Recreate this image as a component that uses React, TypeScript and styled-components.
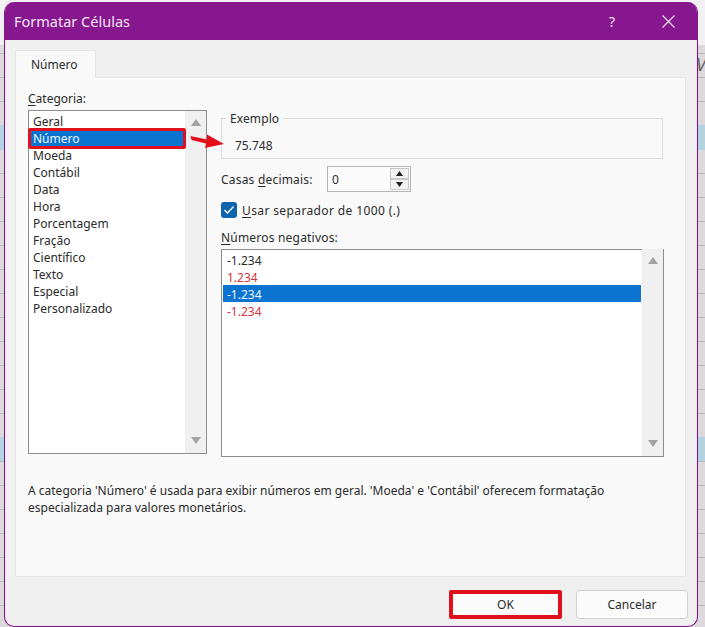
import styled, { createGlobalStyle } from 'styled-components'

const categories = [
	'Geral',
	'Número',
	'Moeda',
	'Contábil',
	'Data',
	'Hora',
	'Porcentagem',
	'Fração',
	'Científico',
	'Texto',
	'Especial',
	'Personalizado',
]

const negatives = [
	{ text: '-1.234', red: false, selected: false },
	{ text: '1.234', red: true, selected: false },
	{ text: '-1.234', red: false, selected: true },
	{ text: '-1.234', red: true, selected: false },
]

const Triangle = ({ down, small }: { down?: boolean; small?: boolean }) => (
	<svg width={small ? 9 : 10} height={small ? 5 : 7} viewBox='0 0 10 7'>
		<path d={down ? 'M0 0H10L5 7Z' : 'M0 7H10L5 0Z'} fill={small ? '#222' : '#a3a3a3'} />
	</svg>
)

const App = () => {
	return (
		<>
			<GlobalStyle />
			<Desktop>
				<ColumnLetter>V</ColumnLetter>
				<Dialog>
					<TitleBar>
						<Title>Formatar Células</Title>
						<HelpButton>?</HelpButton>
						<CloseIcon width='13' height='13' viewBox='0 0 13 13'>
							<path d='M0.5 0.5L12.5 12.5M12.5 0.5L0.5 12.5' stroke='#f5e6f5' strokeWidth='1.1' fill='none' />
						</CloseIcon>
					</TitleBar>

					<TabStrip>
						<Tab>Número</Tab>
					</TabStrip>

					<Panel>
						<Columns>
							<div>
								<FieldLabel>
									<u>C</u>ategoria:
								</FieldLabel>
								<ListBox $height={344} $padTop={2}>
									<ListRows $padLeft={0}>
										{categories.map((category, idx) => (
											<CategoryRow key={category} $selected={idx === 1}>
												{category}
											</CategoryRow>
										))}
									</ListRows>
									<ScrollTrack $top={8} $bottom={9}>
										<Triangle />
										<Triangle down />
									</ScrollTrack>
								</ListBox>
							</div>

							<RightColumn>
								<SampleGroup>
									<SampleLegend>Exemplo</SampleLegend>
									<SampleValue>75.748</SampleValue>
								</SampleGroup>

								<DecimalsRow>
									<DecimalsLabel>
										Casas <u>d</u>ecimais:
									</DecimalsLabel>
									<SpinBox>
										<span>0</span>
										<SpinButtons>
											<SpinButton>
												<Triangle small />
											</SpinButton>
											<SpinButton>
												<Triangle small down />
											</SpinButton>
										</SpinButtons>
									</SpinBox>
								</DecimalsRow>

								<CheckRow>
									<CheckBox>
										<svg width='12' height='10' viewBox='0 0 12 10'>
											<path d='M1.5 5L4.5 8L10.5 1.5' stroke='#fff' strokeWidth='1.3' fill='none' />
										</svg>
									</CheckBox>
									<span>
										<u>U</u>sar separador de 1000 (.)
									</span>
								</CheckRow>

								<NegativesLabel>
									<u>N</u>úmeros negativos:
								</NegativesLabel>
								<ListBox $height={208} $padTop={1}>
									<ListRows $padLeft={1}>
										{negatives.map((row, idx) => (
											<NegativeRow key={idx} $red={row.red} $selected={row.selected}>
												{row.text}
											</NegativeRow>
										))}
									</ListRows>
									<ScrollTrack $top={8} $bottom={9}>
										<Triangle />
										<Triangle down />
									</ScrollTrack>
								</ListBox>
							</RightColumn>
						</Columns>

						<Description>
							A categoria 'Número' é usada para exibir números em geral. 'Moeda' e 'Contábil' oferecem formatação
							<br />
							especializada para valores monetários.
						</Description>

						<Arrow width='36' height='16' viewBox='0 0 36 16'>
							<path d='M0.5 2L1.5 6L16 9.5L15 14L34 10L17 0.5L17 5.5Z' fill='#e3101c' />
						</Arrow>
					</Panel>

					<Footer>
						<OkButton>OK</OkButton>
						<CancelButton>Cancelar</CancelButton>
					</Footer>
				</Dialog>
			</Desktop>
		</>
	)
}

export default App

const GlobalStyle = createGlobalStyle`
	html, body {
		margin: 0;
		padding: 0;
		background: #dcd8dc;
	}
	* {
		box-sizing: border-box;
	}
	u {
		text-underline-offset: 2px;
		text-decoration-thickness: 1px;
	}
`

const Desktop = styled.div`
	position: relative;
	width: 705px;
	height: 627px;
	padding: 2px 7px 0 4px;
	overflow: hidden;
	font-family: 'Noto Sans', 'Liberation Sans', sans-serif;
	font-size: 12px;
	line-height: 17px;
	color: #2b2b2b;
	background-color: #dcd8dc;
	background-image: linear-gradient(#f2f0f2 0 45px, transparent 45px),
		linear-gradient(
			transparent 0 125px,
			#b3d3e2 125px 150px,
			transparent 150px 437px,
			#b3d3e2 437px 461px,
			transparent 461px
		),
		repeating-linear-gradient(#bdbabd 0 1px, transparent 1px 24px);
	background-position: 0 0, 0 0, 0 5px;
`
const ColumnLetter = styled.span`
	position: absolute;
	top: 56px;
	left: 696px;
	font-size: 18px;
	font-style: italic;
	color: #666;
`
const Dialog = styled.div`
	position: relative;
	display: flex;
	flex-direction: column;
	width: 694px;
	height: 625px;
	background: #f0f0f0;
	border: 1px solid #7d1a86;
	border-top: 0;
	border-radius: 10px;
	overflow: hidden;
	box-shadow: inset 0 0 0 1px #f3e2f4;
`
const TitleBar = styled.div`
	display: flex;
	align-items: center;
	flex: none;
	height: 38px;
	margin: 0 -1px;
	padding: 0 23px 0 10px;
	background: #87178f;
	color: #f5e3f5;
`
const Title = styled.div`
	flex: 1;
	font-size: 14.5px;
`
const HelpButton = styled.span`
	margin-right: 47px;
	font-size: 14px;
`
const CloseIcon = styled.svg`
	display: block;
`
const TabStrip = styled.div`
	flex: none;
	height: 37px;
	padding: 10px 0 0 10px;
`
const Tab = styled.div`
	position: relative;
	z-index: 1;
	width: 81px;
	height: 28px;
	padding: 5px 0 0 15px;
	background: #f9f9f9;
	border: 1px solid #e6e6e6;
	border-bottom: 0;
`
const Panel = styled.div`
	position: relative;
	flex: none;
	width: 671px;
	height: 500px;
	margin-left: 10px;
	padding: 12px 0 0 12px;
	background: #f9f9f9;
	border: 1px solid #e6e6e6;
`
const Columns = styled.div`
	display: grid;
	grid-template-columns: 179px 443px;
	column-gap: 14px;
`
const FieldLabel = styled.div`
	height: 17px;
	margin-bottom: 3px;
`
const ListBox = styled.div<{ $height: number; $padTop: number }>`
	display: flex;
	height: ${p => p.$height}px;
	padding-top: ${p => p.$padTop}px;
	background: #fff;
	border: 1px solid #8e8e8e;
`
const ListRows = styled.div<{ $padLeft: number }>`
	flex: 1;
	padding-left: ${p => p.$padLeft}px;
`
const CategoryRow = styled.div<{ $selected: boolean }>`
	position: relative;
	height: 17px;
	padding-left: 4px;
	${p =>
		p.$selected &&
		`
		background: #0a74d0;
		color: #eef6fd;
		&::after {
			content: '';
			position: absolute;
			inset: -2px -1px -2px -1px;
			border: 3px solid #e0101c;
			border-radius: 2px;
		}
	`}
`
const NegativeRow = styled.div<{ $red: boolean; $selected: boolean }>`
	height: 17px;
	padding-left: 4px;
	margin-right: 1px;
	line-height: 19px;
	color: ${p => (p.$selected ? '#eef6fd' : p.$red ? '#d6343c' : 'inherit')};
	background: ${p => (p.$selected ? '#0a74d0' : 'transparent')};
`
const ScrollTrack = styled.div<{ $top: number; $bottom: number }>`
	display: flex;
	flex-direction: column;
	align-items: center;
	justify-content: space-between;
	flex: none;
	width: 21px;
	margin-top: -2px;
	padding: ${p => p.$top}px 0 ${p => p.$bottom}px;
	background: #f0f0f0;
	svg {
		display: block;
	}
`
const RightColumn = styled.div`
	margin-top: 20px;
`
const SampleGroup = styled.fieldset`
	width: 442px;
	min-width: 0;
	height: 49px;
	margin: 0;
	padding: 0 4px;
	border: 1px solid #dcdcdc;
`
const SampleLegend = styled.legend`
	padding: 0 4px;
	line-height: 17px;
	letter-spacing: 0.1px;
`
const SampleValue = styled.div`
	padding: 10px 0 0 9px;
`
const DecimalsRow = styled.div`
	display: flex;
	align-items: center;
	height: 26px;
	margin-top: 7px;
`
const DecimalsLabel = styled.span`
	width: 106px;
	letter-spacing: 0.2px;
`
const SpinBox = styled.div`
	display: flex;
	align-items: center;
	justify-content: space-between;
	width: 84px;
	height: 26px;
	padding: 0 1px 0 4px;
	background: #fbfbfb;
	border: 1px solid #b5b5b5;
`
const SpinButtons = styled.div`
	display: flex;
	flex-direction: column;
	width: 19px;
	height: 22px;
`
const SpinButton = styled.div`
	display: flex;
	align-items: center;
	justify-content: center;
	flex: 1;
	background: #f2f2f2;
	border: 1px solid #c9c9c9;
	svg {
		display: block;
	}
`
const CheckRow = styled.div`
	display: flex;
	align-items: center;
	gap: 5px;
	height: 16px;
	margin-top: 10px;
	letter-spacing: 0.38px;
`
const CheckBox = styled.div`
	display: flex;
	align-items: center;
	justify-content: center;
	width: 16px;
	height: 16px;
	background: #0f64ae;
	border-radius: 3px;
`
const NegativesLabel = styled.div`
	height: 17px;
	margin: 11px 0 3px;
	letter-spacing: 0.2px;
`
const Description = styled.div`
	margin-top: 25px;
	white-space: nowrap;
`
const Arrow = styled.svg`
	position: absolute;
	left: 174px;
	top: 56px;
`
const Footer = styled.div`
	display: flex;
	justify-content: flex-end;
	gap: 14px;
	flex: none;
	padding: 13px 9px 0 0;
`
const OkButton = styled.div`
	display: flex;
	align-items: center;
	justify-content: center;
	width: 113px;
	height: 29px;
	background: #fbfbfb;
	border: 4px solid #e0101c;
	border-radius: 2px;
`
const CancelButton = styled.div`
	display: flex;
	align-items: center;
	justify-content: center;
	width: 112px;
	height: 29px;
	background: #fbfbfb;
	border: 1px solid #d0d0d0;
	border-radius: 4px;
`
